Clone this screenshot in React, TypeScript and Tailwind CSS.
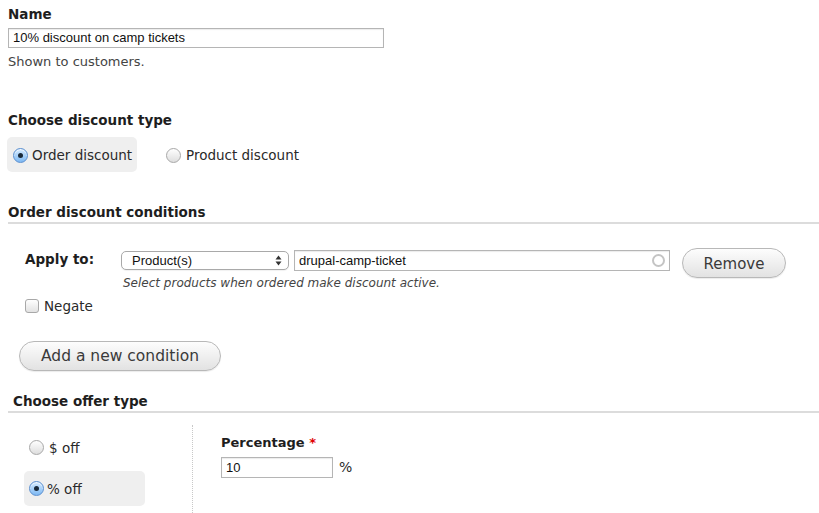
import React from 'react';

const Radio: React.FC<{ checked?: boolean }> = ({ checked }) =>
  checked ? (
    <span className="flex h-[15px] w-[15px] shrink-0 items-center justify-center rounded-full border border-[#5a8fd0] bg-linear-to-b from-[#d5ebff] to-[#7db8f2] shadow-[inset_0_1px_1px_rgba(255,255,255,0.8)]">
      <span className="h-[5px] w-[5px] rounded-full bg-[#1a2a3a]" />
    </span>
  ) : (
    <span className="h-[15px] w-[15px] shrink-0 rounded-full border border-[#a8a8a8] bg-linear-to-b from-[#fefefe] to-[#dedede]" />
  );

const PillButton: React.FC<{ label: string; className?: string }> = ({ label, className }) => (
  <button
    className={`rounded-full border border-[#b8b8b8] bg-linear-to-b from-[#fdfdfd] to-[#e2e2e2] text-[#3a3a3a] shadow-[0_1px_1px_rgba(0,0,0,0.08)] ${className ?? ''}`}
  >
    {label}
  </button>
);

const Heading: React.FC<{ children: React.ReactNode; className?: string }> = ({ children, className }) => (
  <h2 className={`text-[13.5px] font-bold leading-[18px] text-[#1e1e1e] ${className ?? ''}`}>{children}</h2>
);

const App: React.FC = () => {
  return (
    <div className="h-[513px] w-[819px] overflow-hidden bg-white pl-[8px] pt-[5px] font-['DejaVu_Sans',sans-serif] text-[13.5px] text-[#2a2a2a]">
      {/* Name */}
      <Heading>Name</Heading>
      <div className="mt-[5px] flex h-[20px] w-[376px] items-center border border-[#b5b5b5] bg-white pl-[4px] font-['Liberation_Sans',Arial,sans-serif] text-[13px] text-[#111] shadow-[inset_0_1px_1px_rgba(0,0,0,0.08)]">
        10% discount on camp tickets
      </div>
      <p className="mt-[5px] text-[13px] leading-[18px] text-[#444]">Shown to customers.</p>

      {/* Discount type */}
      <Heading className="mt-[40px]">Choose discount type</Heading>
      <div className="mt-[8px] flex items-center">
        <label className="flex h-[35px] w-[130px] -ml-[1px] items-center gap-[4px] rounded-[5px] bg-[#efefef] pl-[6px] pt-[1px]">
          <Radio checked />
          <span>Order discount</span>
        </label>
        <label className="ml-[29px] flex items-center gap-[5px] pt-[1px]">
          <Radio />
          <span>Product discount</span>
        </label>
      </div>

      {/* Conditions */}
      <Heading className="mt-[31px] border-b-2 border-[#dcdcdc] pb-[1px]">Order discount conditions</Heading>
      <div className="mt-[24px] flex items-start pl-[17px]">
        <span className="mt-[2px] w-[96px] text-[13.5px] font-bold leading-[18px] text-[#1e1e1e]">Apply to:</span>
        <div className="mt-[2px] flex flex-col">
          <div className="flex items-center gap-[5px]">
            <div className="relative flex h-[19px] w-[168px] items-center rounded-[5px] border border-[#a9a9a9] bg-white pl-[10px] font-['Liberation_Sans',Arial,sans-serif] text-[13px] text-[#111] shadow-[0_1px_1px_rgba(0,0,0,0.06)]">
              Product(s)
              <svg className="absolute right-[6px] top-[3px]" width="7" height="11" viewBox="0 0 7 11">
                <path d="M0.5 4.5 L3.5 0.5 L6.5 4.5 Z" fill="#333" />
                <path d="M0.5 6.5 L3.5 10.5 L6.5 6.5 Z" fill="#333" />
              </svg>
            </div>
            <div className="relative flex h-[21px] w-[376px] items-center border border-[#b5b5b5] bg-white pl-[4px] font-['Liberation_Sans',Arial,sans-serif] text-[13px] text-[#111] shadow-[inset_0_1px_1px_rgba(0,0,0,0.08)]">
              drupal-camp-ticket
              <span className="absolute right-[4px] top-[3px] h-[13px] w-[13px] rounded-full border-2 border-[#c4c4c4]" />
            </div>
          </div>
          <p className="ml-[2px] mt-[4px] text-[12px] italic leading-[16px] text-[#444]">
            Select products when ordered make discount active.
          </p>
        </div>
        <PillButton label="Remove" className="ml-[12px] h-[30px] w-[104px] pt-[2px] text-[15px]" />
      </div>
      <label className="ml-[17px] mt-[5px] flex items-center gap-[5px]">
        <span className="h-[14px] w-[14px] rounded-[3px] border border-[#a8a8a8] bg-linear-to-b from-[#fefefe] to-[#e2e2e2]" />
        <span>Negate</span>
      </label>
      <PillButton label="Add a new condition" className="ml-[11px] mt-[25px] h-[30px] w-[202px] text-[15.5px]" />

      {/* Offer type */}
      <Heading className="mt-[21px] border-b-2 border-[#dcdcdc] pb-[1px] pl-[5px]">Choose offer type</Heading>
      <div className="mt-[12px] flex h-[100px]">
        <div className="flex w-[185px] flex-col gap-[6px] border-r border-dotted border-[#c8c8c8] pl-[16px] pt-[5px]">
          <label className="flex h-[35px] items-center gap-[5px] pl-[5px]">
            <Radio />
            <span>$ off</span>
          </label>
          <label className="flex h-[35px] w-[121px] items-center gap-[3px] rounded-[5px] bg-[#efefef] pl-[5px]">
            <Radio checked />
            <span>% off</span>
          </label>
        </div>
        <div className="pl-[28px] pt-[9px]">
          <p className="text-[13px] font-bold leading-[18px] text-[#1e1e1e]">
            Percentage <span className="text-[#e00000]">*</span>
          </p>
          <div className="mt-[5px] flex items-center gap-[6px]">
            <div className="flex h-[21px] w-[112px] items-center border border-[#b5b5b5] bg-white pl-[4px] font-['Liberation_Sans',Arial,sans-serif] text-[13px] text-[#111] shadow-[inset_0_1px_1px_rgba(0,0,0,0.08)]">
              10
            </div>
            <span className="text-[14px]">%</span>
          </div>
        </div>
      </div>
    </div>
  );
};

export default App;
